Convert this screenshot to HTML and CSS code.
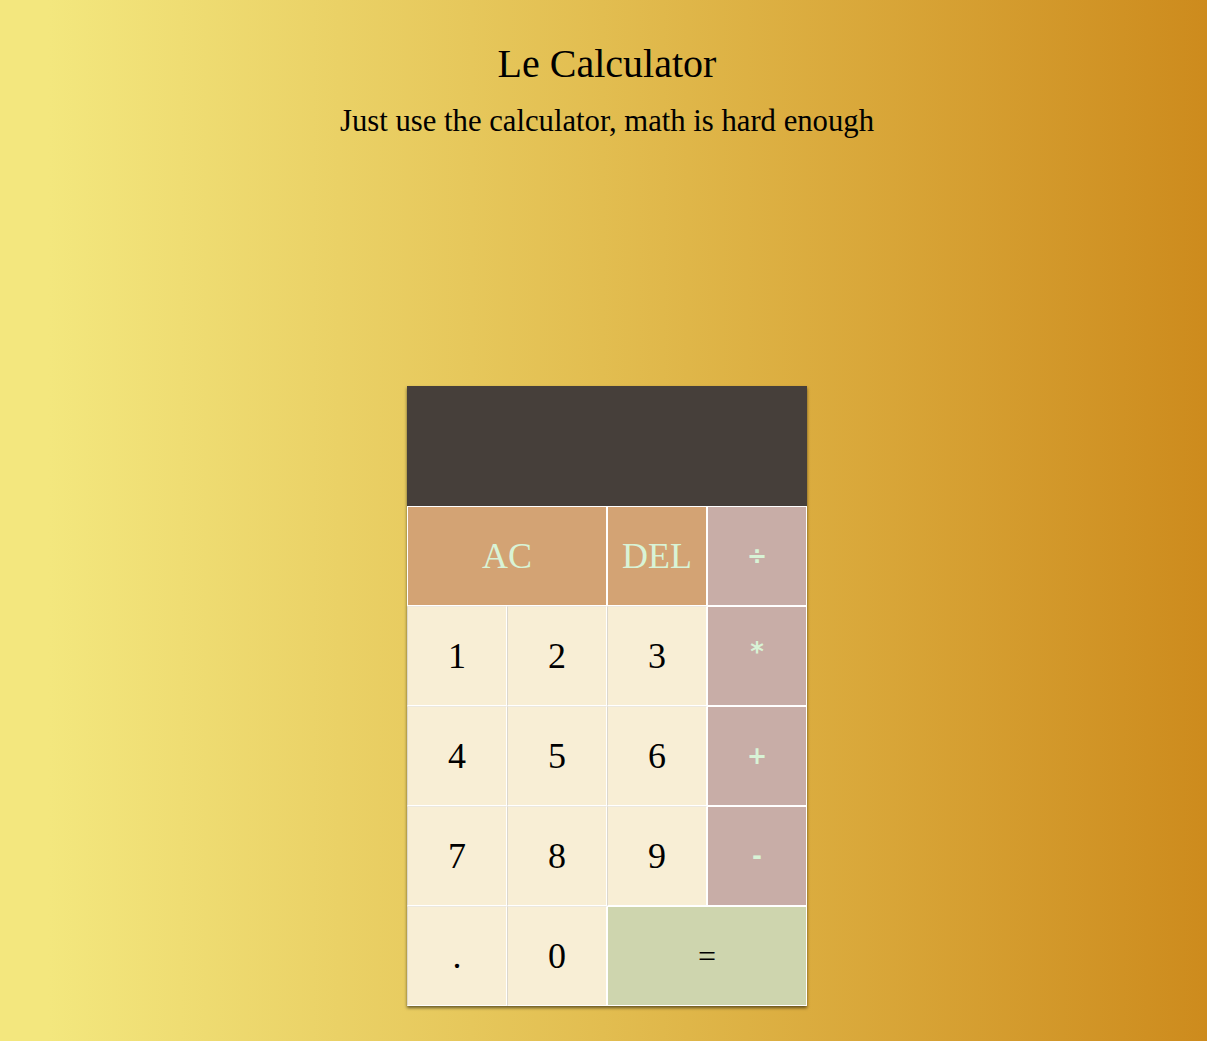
FILE: index.html
```html
<!DOCTYPE html>
<html lang="en">
<head>
<meta charset="utf-8">
<title>Le Calculator</title>
<link rel="stylesheet" href="styles.css">
</head>
<body>
<main class="page">
  <header class="intro">
    <h1 class="title">Le Calculator</h1>
    <p class="subtitle">Just use the calculator, math is hard enough</p>
  </header>
  <div class="calculator">
    <div class="display"></div>
    <button class="key key-clear span-two">AC</button>
    <button class="key key-clear">DEL</button>
    <button class="key key-op">÷</button>
    <button class="key">1</button>
    <button class="key">2</button>
    <button class="key">3</button>
    <button class="key key-op key-star">*</button>
    <button class="key">4</button>
    <button class="key">5</button>
    <button class="key">6</button>
    <button class="key key-op">+</button>
    <button class="key">7</button>
    <button class="key">8</button>
    <button class="key">9</button>
    <button class="key key-op">-</button>
    <button class="key">.</button>
    <button class="key">0</button>
    <button class="key key-equals span-two">=</button>
  </div>
</main>
</body>
</html>
```

FILE: styles.css
```css
html, body {
  margin: 0;
  padding: 0;
}

body {
  min-height: 100vh;
  background: linear-gradient(to right, #f3e77e 4%, #e2bd50 50%, #cd8b1d 100%);
  font-family: "Liberation Serif", "Times New Roman", serif;
  color: #000;
}

.page {
  display: flex;
  flex-direction: column;
  align-items: center;
  padding-top: 41px;
  padding-left: 7px;
  min-height: 1041px;
  box-sizing: border-box;
}

.intro {
  text-align: center;
}

.title {
  margin: 0;
  font-size: 40px;
  line-height: 46px;
  font-weight: normal;
}

.subtitle {
  margin: 17px 0 0;
  font-size: 30.7px;
  line-height: 34px;
}

.calculator {
  margin-top: 248px;
  display: grid;
  grid-template-columns: repeat(4, 100px);
  grid-template-rows: 120px repeat(5, 100px);
  box-shadow: 0 2px 3px rgba(0, 0, 0, 0.55);
}

.display {
  grid-column: 1 / -1;
  background: #463f3a;
}

.key {
  margin: 0;
  padding: 0;
  border: 1px solid #ffffff;
  border-top-color: #ece8df;
  border-left-color: #dcd7cc;
  background: #f8eed5;
  font-family: "Liberation Serif", "Times New Roman", serif;
  font-size: 36px;
  color: #000;
  cursor: pointer;
}

.span-two {
  grid-column: span 2;
}

.key-clear {
  background: #d3a374;
  color: #d8f3d6;
  border-color: #ffffff;
}

.key-op {
  background: #c8ada7;
  color: #d8f3d6;
  font-family: "DejaVu Sans", sans-serif;
  font-weight: bold;
  font-size: 24px;
  border-color: #ffffff;
}

.key-star {
  font-size: 26px;
  padding-bottom: 8px;
}

.key-equals {
  background: #ced5ae;
  font-size: 32px;
  border-color: #ffffff;
}
```
